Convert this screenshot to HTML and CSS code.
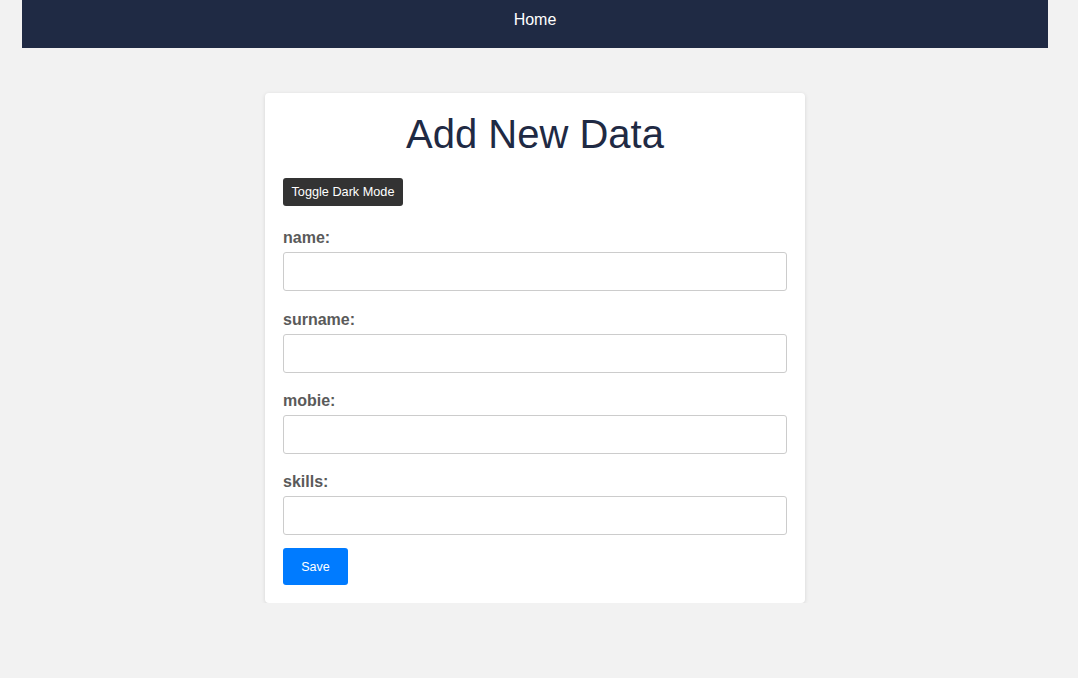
FILE: index.html
```html
<!DOCTYPE html>
<html>
<head>
<meta charset="utf-8">
<link rel="stylesheet" href="styles.css">
</head>
<body>
<nav class="navbar"><a class="nav-link" href="#">Home</a></nav>
<main class="page">
  <form class="card">
    <h1 class="title">Add New Data</h1>
    <div class="toggle-row"><button type="button" class="btn-toggle">Toggle Dark Mode</button></div>
    <div class="field">
      <label class="label">name:</label>
      <input class="input" type="text">
    </div>
    <div class="field">
      <label class="label">surname:</label>
      <input class="input" type="text">
    </div>
    <div class="field">
      <label class="label">mobie:</label>
      <input class="input" type="text">
    </div>
    <div class="field">
      <label class="label">skills:</label>
      <input class="input" type="text">
    </div>
    <div class="actions"><button type="button" class="btn-save">Save</button></div>
  </form>
</main>
</body>
</html>
```
FILE: styles.css
```css
* { box-sizing: border-box; }
body {
  margin: 0;
  background: #f2f2f2;
  font-family: "Liberation Sans", Arial, sans-serif;
}
.navbar {
  margin: 0 30px 0 22px;
  height: 48px;
  background: #1f2a44;
  display: flex;
  justify-content: center;
  padding-top: 11px;
}
.nav-link {
  color: #ffffff;
  text-decoration: none;
  font-size: 16px;
  line-height: 18px;
  height: 18px;
}
.page {
  display: flex;
  justify-content: center;
  padding-top: 45px;
  padding-right: 8px;
}
.card {
  width: 540px;
  background: #ffffff;
  border-radius: 4px;
  box-shadow: 0 1px 4px rgba(0,0,0,0.12);
  padding: 18px 18px 18px;
  display: flex;
  flex-direction: column;
}
.title {
  margin: 0;
  text-align: center;
  font-size: 40px;
  font-weight: normal;
  color: #1f2a44;
  line-height: 46px;
  padding-bottom: 21px;
}
.toggle-row { display: flex; margin-bottom: 23.4px; }
.btn-toggle {
  background: #333333;
  color: #ffffff;
  border: none;
  border-radius: 3px;
  font-family: "Liberation Sans", Arial, sans-serif;
  font-size: 12.7px;
  height: 28px;
  padding: 0;
  width: 120px;
}
.field {
  display: flex;
  flex-direction: column;
  margin-bottom: 19.33px;
}
.label {
  font-weight: bold;
  font-size: 16px;
  color: #5a5a5a;
  line-height: 18px;
  margin-bottom: 5px;
}
.input {
  height: 39px;
  border: 1px solid #cccccc;
  border-radius: 3px;
  width: 100%;
  font-size: 16px;
  padding: 8px;
}
.actions { display: flex; margin-top: -6.5px; }
.btn-save {
  background: #007bff;
  color: #ffffff;
  border: none;
  border-radius: 3px;
  font-family: "Liberation Sans", Arial, sans-serif;
  font-size: 12.5px;
  width: 65px;
  height: 37px;
}
```
